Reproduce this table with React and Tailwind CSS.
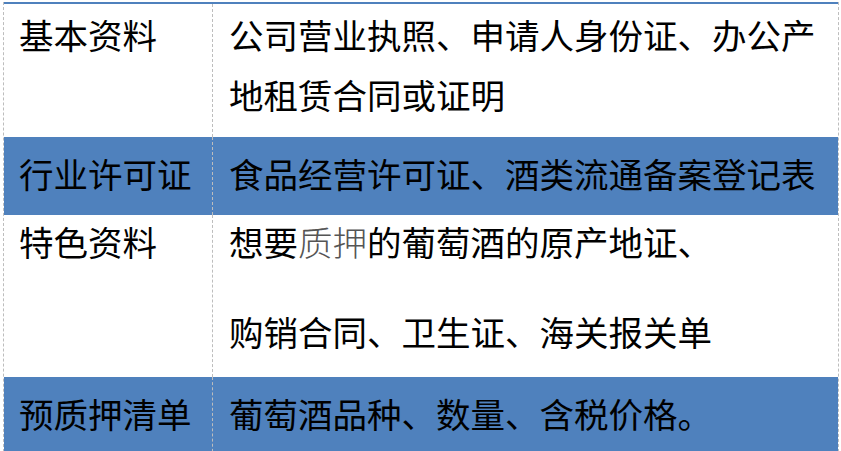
const rows = [
  {
    label: '基本资料',
    blue: false,
    cls: 'h-[133px] pt-[3px] leading-[60px]',
    body: (
      <p>
        公司营业执照、申请人身份证、办公产
        <br />
        地租赁合同或证明
      </p>
    ),
  },
  {
    label: '行业许可证',
    blue: true,
    cls: 'h-[78px] pt-[9px] leading-[60px]',
    body: <p>食品经营许可证、酒类流通备案登记表</p>,
  },
  {
    label: '特色资料',
    blue: false,
    cls: 'h-[162px] pt-0 leading-[58px]',
    body: (
      <div className="flex flex-col gap-[32px]">
        <p>
          想要<span className="font-light text-[#555]">质押</span>的葡萄酒的原产地证、
        </p>
        <p>购销合同、卫生证、海关报关单</p>
      </div>
    ),
  },
  {
    label: '预质押清单',
    blue: true,
    cls: 'h-[80px] pt-[9px] leading-[60px]',
    body: <p>葡萄酒品种、数量、含税价格。</p>,
  },
]

export default function App() {
  return (
    <div
      className="w-[841px] h-[451px] overflow-hidden bg-white text-black text-[34.5px]"
      style={{ fontFamily: '"Liberation Serif", "Noto Sans CJK SC", serif' }}
    >
      <div className="ml-[3px] mt-[2px] w-[836px] border-x border-dashed border-[#bdbdbd]">
        <div className="h-[2px] bg-[#4f81bd]" />
        {rows.map((row) => (
          <div
            key={row.label}
            className={`grid grid-cols-[209px_1fr] ${row.blue ? 'bg-[#4f81bd]' : 'bg-white'}`}
          >
            <div className={`border-r border-dashed border-[#bdbdbd] pl-[15px] ${row.cls}`}>
              {row.label}
            </div>
            <div className={`pl-[16px] ${row.cls}`}>{row.body}</div>
          </div>
        ))}
      </div>
    </div>
  )
}
